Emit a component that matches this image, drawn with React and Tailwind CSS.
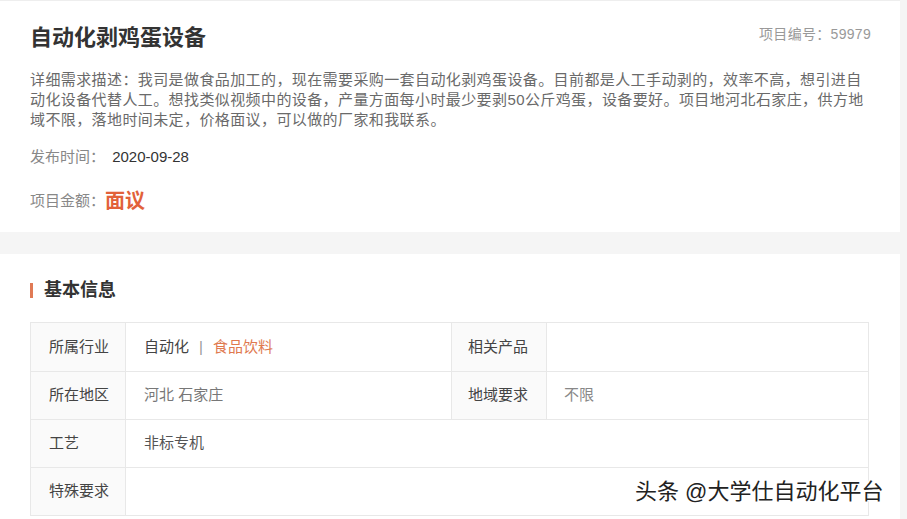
const font = { fontFamily: '"Liberation Sans", "Noto Sans CJK SC", sans-serif' };

const InfoRow = ({ label, children, label2, value2 }) => (
  <div className="flex h-[48px] border-t border-[#e8e8e8] first:border-t-0">
    <div className="w-[95px] shrink-0 bg-[#fafafa] border-r border-[#e8e8e8] pl-[18px] flex items-center text-[#444]">
      {label}
    </div>
    {label2 ? (
      <>
        <div className="w-[325px] shrink-0 pl-[18px] flex items-center text-[#555]">
          {children}
        </div>
        <div className="w-[96px] shrink-0 bg-[#fafafa] border-x border-[#e8e8e8] pl-[16px] flex items-center text-[#444]">
          {label2}
        </div>
        <div className="flex-1 pl-[17px] flex items-center text-[#888]">{value2}</div>
      </>
    ) : (
      <div className="flex-1 pl-[18px] flex items-center text-[#555]">{children}</div>
    )}
  </div>
);

export default function App() {
  return (
    <div className="relative w-[907px] h-[519px] overflow-hidden bg-[#f5f5f5]" style={font}>
      <div className="w-[900px] bg-white border-t border-[#eeeeee] px-[30px] pt-[20px] h-[232px]">
        <div className="flex items-start justify-between">
          <h1 className="text-[22px] leading-[34px] font-bold text-[#333]">自动化剥鸡蛋设备</h1>
          <div className="text-[14px] leading-[26px] text-[#999] mr-[-1px] tracking-[0.3px]">项目编号：59979</div>
        </div>
        <p className="mt-[15px] w-[840px] text-[15px] leading-[20px] text-[#6a6a6a] tracking-[0.4px]">
          详细需求描述：我司是做食品加工的，现在需要采购一套自动化剥鸡蛋设备。目前都是人工手动剥的，效率不高，想引进自动化设备代替人工。想找类似视频中的设备，产量方面每小时最少要剥50公斤鸡蛋，设备要好。项目地河北石家庄，供方地域不限，落地时间未定，价格面议，可以做的厂家和我联系。
        </p>
        <div className="mt-[17px] text-[15px] leading-[20px] text-[#888]">
          发布时间： <span className="text-[#333] ml-[3px]">2020-09-28</span>
        </div>
        <div className="mt-[21px] flex items-center text-[15px] leading-[26px] text-[#888]">
          项目金额：
          <span className="text-[20px] font-bold text-[#e2613a]">面议</span>
        </div>
      </div>

      <div className="mt-[22px] w-[900px] bg-white px-[30px] pt-[26px] h-[300px]">
        <div className="flex items-center gap-[11px]">
          <span className="w-[3px] h-[15px] bg-[#e07a55]" />
          <h2 className="text-[18px] leading-[20px] font-bold text-[#333]">基本信息</h2>
        </div>
        <div className="mt-[22px] w-[839px] border border-[#e8e8e8] text-[15px]">
          <InfoRow label="所属行业" label2="相关产品" value2="">
            <span className="text-[#444]">自动化</span>
            <span className="mx-[10px] text-[#999]">|</span>
            <span className="text-[#e0794f]">食品饮料</span>
          </InfoRow>
          <InfoRow label="所在地区" label2="地域要求" value2="不限">
            <span className="text-[#777]">河北 石家庄</span>
          </InfoRow>
          <InfoRow label="工艺">非标专机</InfoRow>
          <InfoRow label="特殊要求" />
        </div>
      </div>

      <div
        className="absolute left-[635px] top-[478px] text-[22px] leading-[28px] text-[#222] whitespace-nowrap"
        style={{ textShadow: "1px 1px 0 #fff, -1px -1px 0 #fff, 1px -1px 0 #fff, -1px 1px 0 #fff" }}
      >
        头条 @大学仕自动化平台
      </div>
    </div>
  );
}
